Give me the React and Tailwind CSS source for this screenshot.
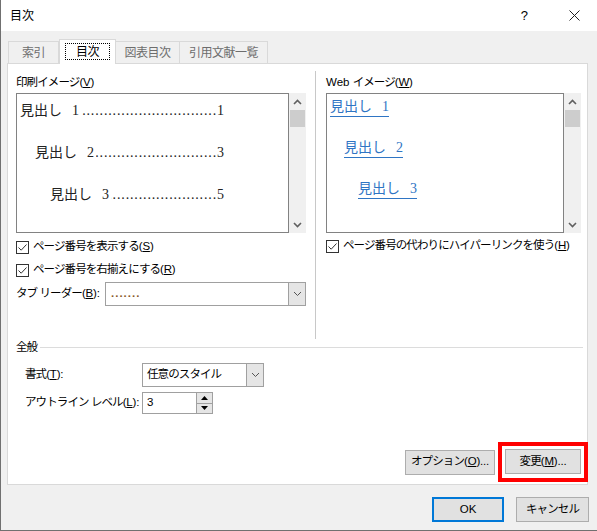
import React from 'react';

const ui = "font-['Liberation_Sans','Noto_Sans_CJK_JP',sans-serif]";
const serif = "font-['Liberation_Serif','Noto_Sans_CJK_JP',serif]";

// mnemonic like (S) with underlined key
const Key = ({ k, tail = '' }) => (
  <span className="tracking-[-0.2px]">(<u>{k}</u>){tail}</span>
);

const Check = () => (
  <span className="w-[13px] h-[13px] border border-[#333333] bg-white flex items-center justify-center shrink-0">
    <svg width="11" height="11" viewBox="0 0 11 11">
      <path d="M1.5 5.5 L4.2 8.2 L9.5 2.5" fill="none" stroke="#333333" strokeWidth="1" />
    </svg>
  </span>
);

const Chevron = ({ down, color = '#606060', w = 1.6 }) => (
  <svg width="9" height="6" viewBox="0 0 9 6">
    <path d={down ? 'M1 1 L4.5 4.5 L8 1' : 'M1 5 L4.5 1.5 L8 5'} stroke={color} strokeWidth={w} fill="none" />
  </svg>
);

const Scrollbar = () => (
  <div className="w-[17px] h-full bg-[#f0f0f0] flex flex-col items-center">
    <div className="h-[17px] flex items-center justify-center">
      <Chevron />
    </div>
    <div className="w-[15px] h-[17px] bg-[#cdcdcd]"></div>
    <div className="flex-1"></div>
    <div className="h-[17px] flex items-center justify-center">
      <Chevron down />
    </div>
  </div>
);

const Select = ({ width, children }) => (
  <div className={`flex h-[24px] border border-[#a0a0a0] bg-white shrink-0 ${width}`}>
    <div className="flex-1 flex items-center">{children}</div>
    <div className="w-[17px] bg-[#e5e5e5] border-l border-[#a0a0a0] flex items-center justify-center">
      <Chevron down color="#555555" w={1} />
    </div>
  </div>
);

// leader dots are right-aligned against the page number (rtl overflow)
const PrintItem = ({ indent, level, page }) => (
  <div className={`flex items-center h-[20px] w-[204px] ${indent}`}>
    <span>見出し</span>
    <span className="ml-[10px] mr-[2px]">{level}</span>
    <span dir="rtl" className="flex-1 overflow-hidden whitespace-nowrap tracking-[0.85px]">
      {'.'.repeat(40)}
    </span>
    <span>{page}</span>
  </div>
);

const WebItem = ({ indent, level }) => (
  <div className={`flex h-[20px] ${indent}`}>
    <span className="text-[#2f75c4] border-b border-[#2f75c4] leading-[18px] h-[19px]">
      見出し<span className="ml-[10px]">{level}</span>
    </span>
  </div>
);

const Btn = ({ w, children, extra = 'border border-[#adadad]' }) => (
  <div className={`h-[25px] ${w} bg-[#e1e1e1] ${extra} flex items-center justify-center shrink-0`}>
    {children}
  </div>
);

export default function App() {
  return (
    <div className={`w-[597px] h-[531px] bg-[#f0f0f0] border-l border-b border-[#707070] flex flex-col text-black text-[11.5px] tracking-[-0.9px] whitespace-nowrap ${ui}`}>
      {/* title bar */}
      <div className="h-[31px] bg-white flex items-center shrink-0">
        <span className="pl-[9px] text-[12px] tracking-normal">目次</span>
        <span className="ml-auto text-[13px] w-[14px] text-center mr-[37px]">?</span>
        <span className="w-[12px] flex items-center justify-center mr-[17px]">
          <svg width="11" height="11" viewBox="0 0 11 11">
            <path d="M0.5 0.5 L10.5 10.5 M10.5 0.5 L0.5 10.5" stroke="#222222" strokeWidth="1" />
          </svg>
        </span>
      </div>

      <div className="pl-[6px] pt-[8px]">
        {/* tabs */}
        <div className="flex items-end pl-[1px] h-[24px] text-[12px] tracking-[-0.5px]">
          <div className="w-[51px] h-[22px] border border-b-0 border-[#d9d9d9] flex items-center justify-center text-[#6d6d6d]">索引</div>
          <div className="w-[57px] h-[25px] -mb-px bg-white border border-b-0 border-[#d9d9d9] flex items-start justify-center pt-[3px] relative z-10">
            <span className="border border-dotted border-black px-[10px] h-[17px] flex items-center">目次</span>
          </div>
          <div className="w-[64px] h-[22px] border border-b-0 border-l-0 border-[#d9d9d9] flex items-center justify-center text-[#6d6d6d]">図表目次</div>
          <div className="w-[88px] h-[22px] border border-b-0 border-l-0 border-[#d9d9d9] flex items-center justify-center text-[#6d6d6d]">引用文献一覧</div>
        </div>

        {/* panel */}
        <div className="w-[581px] h-[422px] bg-white border border-[#d9d9d9] flex flex-col">
          <div className="flex h-[276px] pl-[8px]">
            {/* left column */}
            <div className="w-[290px] flex flex-col">
              <div className="pt-[10px] h-[26px] leading-[16px]">印刷イメージ<Key k="V" /></div>
              <div className="mt-[3px] flex h-[140px]">
                <div className={`w-[273px] h-full border border-[#828282] pl-[3px] pt-[6px] flex flex-col gap-[22px] text-[14px] tracking-normal text-[#222222] ${serif}`}>
                  <PrintItem indent="pl-0" level="1" page="1" />
                  <PrintItem indent="pl-[15px]" level="2" page="3" />
                  <PrintItem indent="pl-[30px]" level="3" page="5" />
                </div>
                <Scrollbar />
              </div>
              <div className="mt-[6px] h-[16px] flex items-center gap-[4px]">
                <Check />
                <span>ページ番号を表示する<Key k="S" /></span>
              </div>
              <div className="mt-[7px] h-[16px] flex items-center gap-[4px]">
                <Check />
                <span>ページ番号を右揃えにする<Key k="R" /></span>
              </div>
              <div className="mt-[4px] flex items-center">
                <span className="w-[89px]">タブ リーダー<Key k="B" tail=":" /></span>
                <Select width="w-[201px]">
                  <span className="pl-[5px] text-[#8a5a2b] tracking-[1px] font-bold">.......</span>
                </Select>
              </div>
            </div>

            {/* separator */}
            <div className="ml-[9px] mt-[7px] w-px h-[268px] bg-[#c8c8c8]"></div>

            {/* right column */}
            <div className="pl-[10px] w-[265px] flex flex-col">
              <div className="pt-[10px] h-[26px] leading-[16px]"><span className="tracking-normal">Web </span>イメージ<Key k="W" /></div>
              <div className="mt-[3px] flex h-[140px]">
                <div className={`w-[238px] h-full border border-[#828282] pl-[3px] pt-[4px] flex flex-col gap-[21px] text-[14px] tracking-normal ${serif}`}>
                  <WebItem indent="pl-0" level="1" />
                  <WebItem indent="pl-[14px]" level="2" />
                  <WebItem indent="pl-[28px]" level="3" />
                </div>
                <Scrollbar />
              </div>
              <div className="mt-[5px] h-[16px] flex items-center gap-[4px]">
                <Check />
                <span>ページ番号の代わりにハイパーリンクを使う<Key k="H" /></span>
              </div>
            </div>
          </div>

          {/* general */}
          <div className="h-[16px] flex items-center pl-[8px]">
            <span>全般</span>
            <div className="flex-1 h-px bg-[#dcdcdc] ml-[3px] mr-[4px] -mt-[2px]"></div>
          </div>
          <div className="mt-[7px] flex items-center pl-[17px]">
            <span className="w-[117px]">書式<Key k="T" tail=":" /></span>
            <Select width="w-[122px]">
              <span className="pl-[4px]">任意のスタイル</span>
            </Select>
          </div>
          <div className="mt-[5px] flex items-center pl-[17px]">
            <span className="w-[117px]">アウトライン レベル<Key k="L" tail=":" /></span>
            <div className="w-[71px] h-[22px] border border-[#a0a0a0] flex bg-white">
              <span className="flex-1 pl-[4px] flex items-center">3</span>
              <div className="w-[16px] flex flex-col border-l border-[#a0a0a0]">
                <div className="flex-1 bg-[#e5e5e5] border-b border-[#a0a0a0] flex items-center justify-center">
                  <svg width="7" height="4" viewBox="0 0 7 4"><path d="M0 4 L3.5 0 L7 4 Z" fill="#000000" /></svg>
                </div>
                <div className="flex-1 bg-[#e5e5e5] flex items-center justify-center">
                  <svg width="7" height="4" viewBox="0 0 7 4"><path d="M0 0 L3.5 4 L7 0 Z" fill="#000000" /></svg>
                </div>
              </div>
            </div>
          </div>

          {/* panel buttons */}
          <div className="mt-auto mb-[2px] flex items-center justify-end gap-[3px] -mr-px">
            <Btn w="w-[90px]">オプション<Key k="O" tail="..." /></Btn>
            <div className="border-[4px] border-[#ff0000] pt-[3px] pb-[4px] px-[3px]">
              <Btn w="w-[76px]">変更<Key k="M" tail="..." /></Btn>
            </div>
          </div>
        </div>

        {/* dialog buttons */}
        <div className="mt-[12px] flex justify-end gap-[12px] w-[582px]">
          <Btn w="w-[72px]" extra="border-2 border-[#0078d7]"><span className="tracking-normal">OK</span></Btn>
          <Btn w="w-[73px]">キャンセル</Btn>
        </div>
      </div>
    </div>
  );
}
